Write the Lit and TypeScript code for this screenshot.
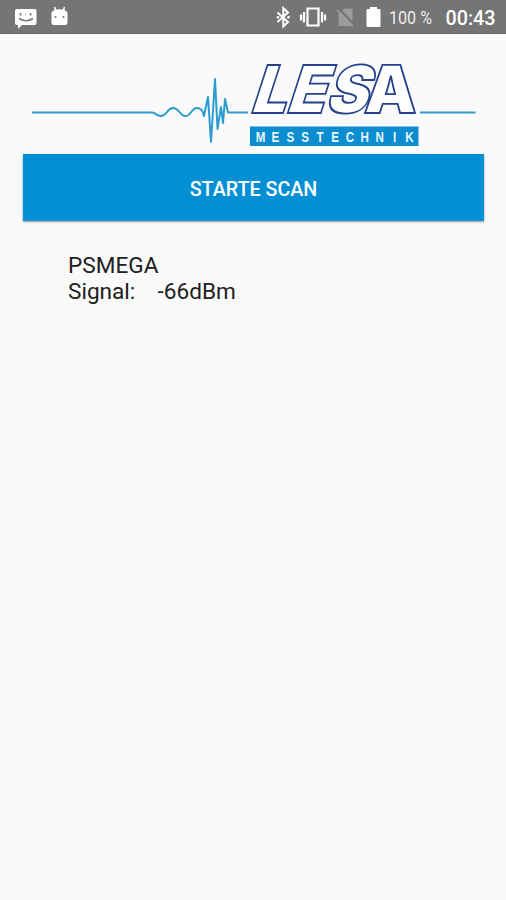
import { LitElement, html, css, svg } from "lit";
import { customElement } from "lit/decorators.js";

@customElement("status-bar")
class StatusBar extends LitElement {
  static styles = css`
    :host { display: block; height: 34px; background: #757575; box-shadow: inset 0 -1px #696969; }
    svg { display: block; width: 100%; height: 34px; }
    text { font-family: Roboto, sans-serif; fill: #fff; }
    .level { font-size: 17.5px; fill: #ededed; }
    .clock { font-size: 20px; font-weight: 500; }
  `;
  render() {
    return html`<svg viewBox="0 0 506 34">
      <path fill="#fff" d="M17 9h17.500a2 2 0 0 1 2 2v12a2 2 0 0 1-2 2H22l-4 4v-4h-1a2 2 0 0 1-2-2V11a2 2 0 0 1 2-2z"/>
      <path d="M19 18.500q7 4.500 14 0M20.500 13v2.500M30.500 13v2.500" fill="none" stroke="#777" stroke-width="1.700"/>
      <path d="M25.500 13.500v1.500" stroke="#aaa"/>
      <path fill="#fff" d="M51.500 12.500h16v10a2.500 2.500 0 0 1-2.500 2.500H54a2.500 2.500 0 0 1-2.500-2.500zM51.500 12.500q1-1.500 3-2.500l-.5-3 1.200-.2 1 2.700q3.300-.7 6.600 0l1-2.700 1.200.2-.5 3q2 1 3 2.500z"/>
      <circle cx="55.500" cy="17" r="1.100" fill="#777"/><circle cx="63.500" cy="17" r="1.100" fill="#777"/>
      <path d="M277.500 12.500l10.500 9.500-4.700 4.500V8l4.700 4.500-10.500 9.500" fill="none" stroke="#fff" stroke-width="2"/>
      <circle cx="278" cy="17.300" r="1.300" fill="#fff"/><circle cx="288.500" cy="17.300" r="1.300" fill="#fff"/>
      <path d="M307.500 8.500h11v17h-11zM304 12v10.500M322 12v10.500M301 14.500v6M325 14.500v6" fill="none" stroke="#fff" stroke-width="2.200"/>
      <path d="M338.500 14l6-5.500h8v17.500h-14z" fill="#9b9b9b"/>
      <path d="M338.500 8.500l16 16.500" stroke="#757575" stroke-width="2.500"/><path d="M337 10l16 16.500" stroke="#a0a0a0" stroke-width="1.700"/>
      <path d="M370 7h7v2h2.500a1 1 0 0 1 1 1v16a1 1 0 0 1-1 1h-12a1 1 0 0 1-1-1V10a1 1 0 0 1 1-1h2.500z" fill="#fff"/>
      <text class="level" x="389" y="24" textLength="43" lengthAdjust="spacingAndGlyphs">100 %</text>
      <text class="clock" x="445.500" y="25.300" textLength="50" lengthAdjust="spacingAndGlyphs">00:43</text>
    </svg>`;
  }
}

const smallLetter = (c: string, i: number) =>
  svg`<text transform="translate(${260.5 + i * 14.900} 142.300) scale(.75 1)">${c}</text>`;

@customElement("lesa-logo")
class LesaLogo extends LitElement {
  static styles = css`
    :host { display: block; height: 119px; }
    svg { display: block; width: 100%; height: 119px; }
    .name { font: 900 66px Inter, "Liberation Sans", sans-serif; fill: #fff; stroke: #24418a; stroke-width: 1.800px; }
    .sub { font: 700 15.500px "Liberation Sans", Arial, sans-serif; fill: #e8f6ff; text-anchor: middle; }
    .wave { fill: none; stroke: #2c9bd0; stroke-width: 2px; stroke-linejoin: round; }
  `;
  render() {
    return html`<svg viewBox="0 34 506 119">
      <path class="wave" d="M32 112.500H152c4 0 4 3.500 9 3.500 6 0 6-8 12-8s7 8 12.500 8 6-8 11.500-8c4 0 6 2 7 8l4-19 3 45 4-63 2.500 50 3.500-22 2 16 2-24 3 13.500H248M420 112.500h55.500"/>
      <g class="name">
        <text transform="translate(249 112.500) skewX(-18)" textLength="117" lengthAdjust="spacingAndGlyphs">LES</text>
        <text transform="translate(363.500 112.500) skewX(-2)" textLength="53" lengthAdjust="spacingAndGlyphs">A</text>
      </g>
      <rect x="250" y="126.500" width="168.500" height="19.500" fill="#0c8dd0"/>
      <g class="sub">${[..."MESSTECHNIK"].map(smallLetter)}</g>
    </svg>`;
  }
}

@customElement("app-root")
class AppRoot extends LitElement {
  static styles = css`
    :host { display: block; min-height: 900px; background: #fafafa; font-family: Roboto, sans-serif; }
    .scan { display: flex; align-items: center; justify-content: center; box-sizing: border-box;
      width: 461px; height: 67px; margin: 1px 22px 0 23px; padding: 3px 0 0; border: 0;
      background: #038fd3; color: #fff; font: 500 19.700px Roboto, sans-serif;
      box-shadow: 0 1px 2px rgba(0,0,0,.4); }
    .device { padding: 32px 68px; font-size: 22.600px; line-height: 26px; color: #202020; }
    .row { display: flex; }
    .key { width: 89.500px; }
  `;
  render() {
    return html`<status-bar></status-bar><lesa-logo></lesa-logo>
      <button class="scan">STARTE SCAN</button>
      <div class="device"><div>PSMEGA</div>
        <div class="row"><span class="key">Signal:</span><span>-66dBm</span></div></div>`;
  }
}
